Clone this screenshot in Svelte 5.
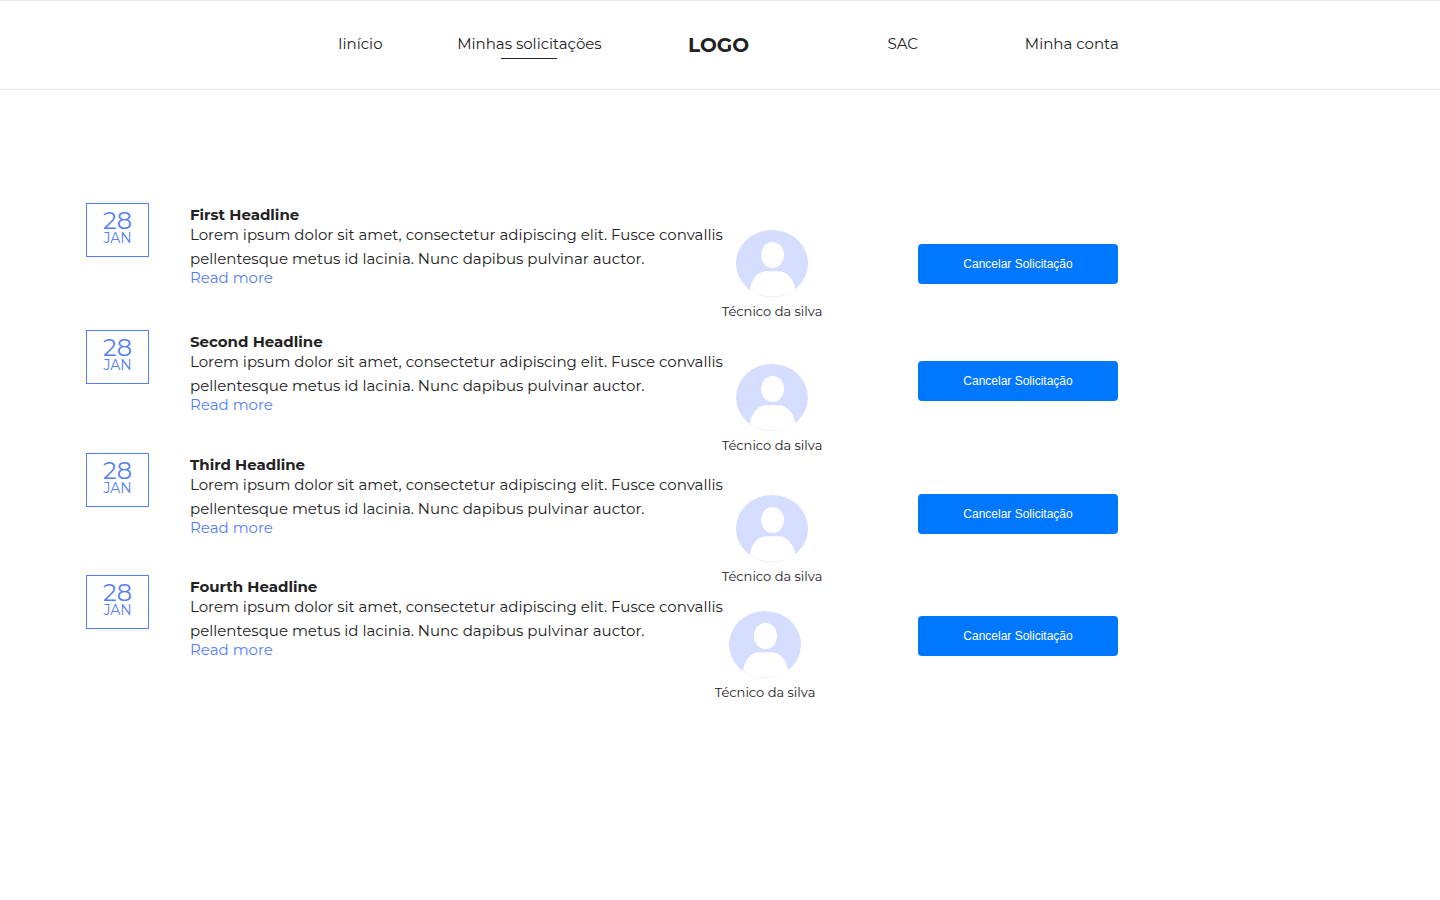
<script>
  const links = [
    { label: 'Iinício' },
    { label: 'Minhas solicitações', active: true },
    { label: 'LOGO', logo: true },
    { label: 'SAC' },
    { label: 'Minha conta' }
  ];

  const summary =
    'Lorem ipsum dolor sit amet, consectetur adipiscing elit. Fusce convallis pellentesque metus id lacinia. Nunc dapibus pulvinar auctor.';

  // "space" is the distance in pixels from the item above in the same column
  const requests = [
    { title: 'First Headline', space: 0 },
    { title: 'Second Headline', space: 41 },
    { title: 'Third Headline', space: 37 },
    { title: 'Fourth Headline', space: 36 }
  ];
  const technicians = [
    { name: 'Técnico da silva', space: 27 },
    { name: 'Técnico da silva', space: 45 },
    { name: 'Técnico da silva', space: 42 },
    { name: 'Técnico da silva', space: 27 }
  ];
  const actions = [41, 77, 93, 82];
</script>

<header>
  <nav>
    {#each links as link}
      <a href="#top" class:active={link.active} class:logo={link.logo}>{link.label}</a>
    {/each}
  </nav>
</header>

<main>
  <section class="requests">
    {#each requests as request}
      <article style="margin-top: {request.space}px">
        <time datetime="01-28"><span class="day">28</span><span class="month">JAN</span></time>
        <div class="text">
          <h2>{request.title}</h2>
          <p>{summary}</p>
          <a href="#more">Read more</a>
        </div>
      </article>
    {/each}
  </section>

  <section class="technicians">
    {#each technicians as technician}
      <figure style="margin-top: {technician.space}px">
        <svg width="72" height="67" viewBox="0 0 72 67" aria-hidden="true">
          <ellipse cx="36" cy="33.5" rx="36" ry="33.5" fill="#d6deff" />
          <ellipse cx="36.5" cy="25" rx="11.5" ry="13" fill="#fff" />
          <path d="M14 59.4C15.5 49 22 41.3 31 41.3H42C51 41.3 57.5 49 59.3 59.2C53 63.9 45 66.6 36 66.6S20 63.9 14 59.4Z" fill="#fff" />
        </svg>
        <figcaption>{technician.name}</figcaption>
      </figure>
    {/each}
  </section>

  <section class="actions">
    {#each actions as space}
      <button type="button" style="margin-top: {space}px">Cancelar Solicitação</button>
    {/each}
  </section>
</main>

<style>
  :global(body) {
    margin: 0;
    background: #fff;
    color: #222;
    font-family: Montserrat, Inter, sans-serif;
    font-size: 15px;
  }

  header {
    box-sizing: border-box;
    height: 90px;
    border-top: 1px solid #e6e6e6;
    border-bottom: 1px solid #e6e6e6;
  }

  nav {
    display: grid;
    grid-template-columns: 110fr 228fr 150fr 218fr 120fr;
    align-items: start;
    justify-items: center;
    padding: 31px 21.4% 0 21.2%;
  }

  nav a {
    color: inherit;
    line-height: 24px;
    text-decoration: none;
    white-space: nowrap;
  }

  .active::after {
    content: '';
    display: block;
    width: 56px;
    height: 1px;
    margin: 2px auto 0;
    background: #222;
  }

  nav .logo {
    font-size: 20px;
    font-weight: 700;
    line-height: 26px;
  }

  main {
    display: grid;
    grid-template-columns: minmax(0, 636fr) 196px 200px minmax(0, 322fr);
    padding: 113px 0 40px 86px;
  }

  article {
    display: flex;
    align-items: flex-start;
    gap: 41px;
    height: 86px;
  }

  time {
    box-sizing: border-box;
    display: flex;
    flex: none;
    flex-direction: column;
    align-items: center;
    width: 63px;
    height: 54px;
    padding-top: 5px;
    border: 1px solid #557ff7;
    color: #557ff7;
  }

  .day {
    font-size: 24px;
    line-height: 24px;
  }

  .month {
    font-size: 14px;
    line-height: 10px;
  }

  .text {
    flex: none;
    width: 540px;
    padding-top: 4px;
  }

  h2 {
    margin: 0;
    font-size: 15px;
    font-weight: 700;
    line-height: 16px;
  }

  p {
    margin: 0;
    line-height: 24px;
  }

  .text a {
    display: block;
    color: #557ff7;
    line-height: 14px;
    text-decoration: none;
  }

  .technicians {
    width: 100px;
  }

  figure {
    display: flex;
    flex-direction: column;
    align-items: center;
    margin: 0;
  }

  figure:last-child {
    margin-left: -14px;
  }

  figcaption {
    font-size: 13px;
    line-height: 16px;
    margin-top: 6px;
    white-space: nowrap;
  }

  .actions {
    display: flex;
    flex-direction: column;
  }

  button {
    height: 40px;
    padding: 0;
    border: 0;
    border-radius: 4px;
    background: #0077ff;
    color: #fff;
    font: 12px "Liberation Sans", Arial, sans-serif;
    cursor: pointer;
  }
</style>
